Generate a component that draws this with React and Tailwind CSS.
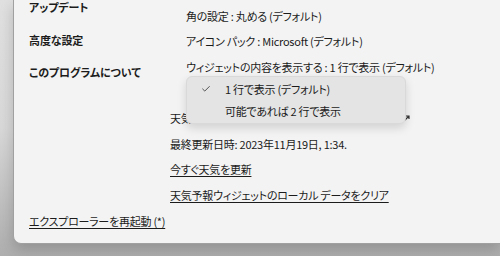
import { Check } from 'lucide-react';

const font = "font-['Noto_Sans_CJK_JP','Noto_Sans',sans-serif] [font-feature-settings:'palt']";

function Row({ indent, children }) {
  return (
    <div className={`h-[25.6px] flex items-center ${indent ? 'pl-4' : ''}`}>
      {children}
    </div>
  );
}

export default function App() {
  return (
    <div className={`w-[500px] h-[256px] overflow-hidden bg-gradient-to-b from-[#e0e0e0] via-[#d8d8d8] to-[#aeaeae] ${font}`}>
      <div className="ml-[13px] h-[244px] bg-[#f3f3f3] border-l border-b border-[#a0a0a0] rounded-bl-lg shadow-[0_6px_14px_rgba(0,0,0,0.18)] flex flex-col text-[#1b1b1b]">
        <div className="flex flex-1">
          {/* left nav */}
          <div className="w-[156px] pl-[15px] text-[11px] font-bold leading-5 tracking-[-0.1px]">
            <div className="mt-[-3px]">アップデート</div>
            <div className="mt-[13px]">高度な設定</div>
            <div className="mt-[12px]">このプログラムについて</div>
          </div>

          {/* settings */}
          <div className="relative flex-1 pt-[3px] text-[11px] leading-5 tracking-[-0.25px]">
            <Row indent>角の設定 : 丸める (デフォルト)</Row>
            <Row indent>アイコン&nbsp;パック : Microsoft (デフォルト)</Row>
            <Row indent>ウィジェットの内容を表示する : 1 行で表示 (デフォルト)</Row>
            <Row indent />
            <Row>
              <div className="w-[240px] flex items-center justify-between">
                <span>天気予報の場所 : 東京都</span>
                <svg className="w-[6px] h-[6px]" viewBox="0 0 6 6">
                  <path d="M1 5L5 1M2 1h3v3" stroke="#333" strokeWidth="1.2" fill="none" />
                </svg>
              </div>
            </Row>
            <Row>最終更新日時: 2023年11月19日, 1:34.</Row>
            <Row><span className="underline underline-offset-2">今すぐ天気を更新</span></Row>
            <Row><span className="underline underline-offset-2">天気予報ウィジェットのローカル データをクリア</span></Row>

            {/* dropdown menu */}
            <div className="absolute left-4 top-[76px] w-[220px] h-[48px] bg-[#e4e4e4] rounded-md border border-[#d9d9d9] shadow-[0_4px_10px_rgba(0,0,0,0.14)] py-[1px]">
              <div className="h-[22px] flex items-center">
                <Check className="w-[10px] h-[10px] ml-[14px] mr-[14px] text-[#333]" strokeWidth={2} />
                <span>1 行で表示 (デフォルト)</span>
              </div>
              <div className="h-[22px] flex items-center pl-[38px]">可能であれば 2 行で表示</div>
            </div>
          </div>
        </div>

        <div className="pl-[15px] pb-[12px] text-[11px] leading-5 tracking-[-0.25px]">
          <span className="underline underline-offset-2">エクスプローラーを再起動 (*)</span>
        </div>
      </div>
    </div>
  );
}
